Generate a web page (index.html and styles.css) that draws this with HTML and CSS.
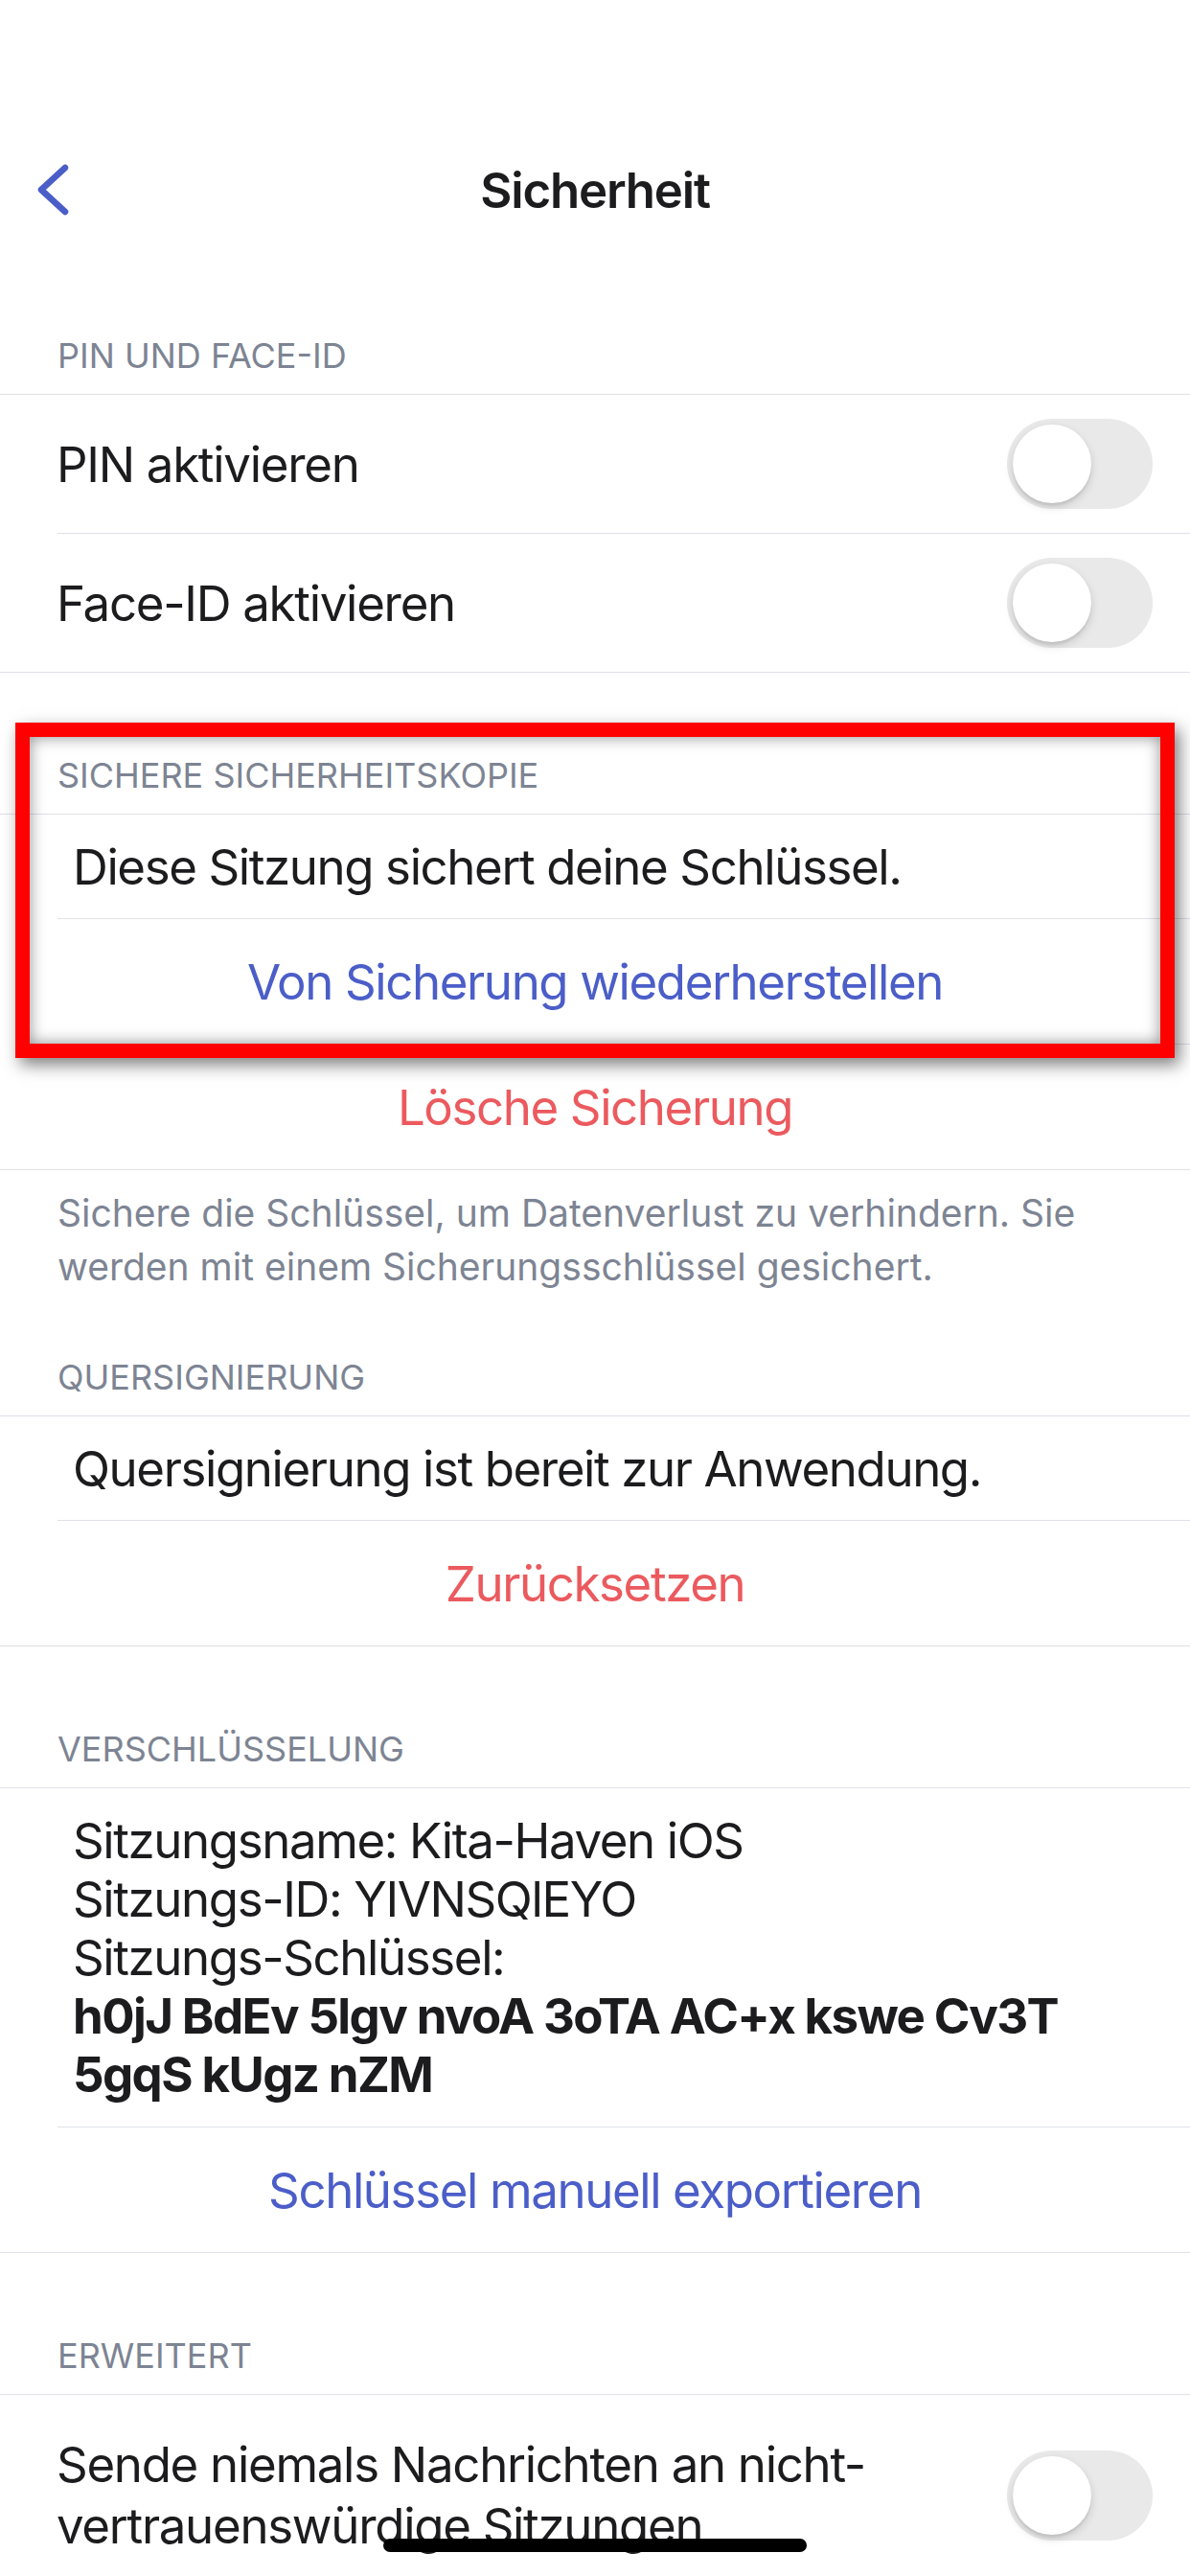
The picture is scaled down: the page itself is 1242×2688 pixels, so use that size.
FILE: index.html
```html
<!DOCTYPE html>
<html lang="de">
<head>
    <meta charset="UTF-8">
    <meta name="viewport" content="width=device-width, initial-scale=1.0">
    <title>Sicherheit</title>
    <link rel="stylesheet" href="styles.css">
</head>
<body>
    <div class="status-bar"></div>

    <div class="nav-bar">
        <div class="nav-back">
            <svg width="44" height="56" viewBox="0 0 44 56">
                <path d="M33 5 L8 28 L33 51" fill="none" stroke="#4b5ec8" stroke-width="6.5" stroke-linecap="round" stroke-linejoin="round"/>
            </svg>
        </div>
        <div class="nav-title">Sicherheit</div>
        <div></div>
    </div>

    <!-- PIN / Face-ID -->
    <div class="section-header">PIN und Face-ID</div>
    <div class="group">
        <div class="cell-toggle">
            <span>PIN aktivieren</span>
            <div class="toggle"><div class="knob"></div></div>
        </div>
        <div class="sep"></div>
        <div class="cell-toggle">
            <span>Face-ID aktivieren</span>
            <div class="toggle"><div class="knob"></div></div>
        </div>
    </div>

    <!-- Backup -->
    <div class="section-header">Sichere Sicherheitskopie</div>
    <div class="group">
        <div class="cell-info">Diese Sitzung sichert deine Schlüssel.</div>
        <div class="sep"></div>
        <div class="cell-button blue">Von Sicherung wiederherstellen</div>
        <div class="sep"></div>
        <div class="cell-button red">Lösche Sicherung</div>
    </div>
    <div class="footer">Sichere die Schlüssel, um Datenverlust zu verhindern. Sie<br>werden mit einem Sicherungsschlüssel gesichert.</div>

    <!-- Cross signing -->
    <div class="section-header after-footer">Quersignierung</div>
    <div class="group">
        <div class="cell-info">Quersignierung ist bereit zur Anwendung.</div>
        <div class="sep"></div>
        <div class="cell-button red">Zurücksetzen</div>
    </div>

    <!-- Encryption -->
    <div class="section-header">Verschlüsselung</div>
    <div class="group">
        <div class="cell-session">
            Sitzungsname: Kita-Haven iOS<br>
            Sitzungs-ID: YIVNSQlEYO<br>
            Sitzungs-Schlüssel:<br>
            <span class="key">h0jJ BdEv 5lgv nvoA 3oTA AC+x kswe Cv3T<br>5gqS kUgz nZM</span>
        </div>
        <div class="sep"></div>
        <div class="cell-button blue">Schlüssel manuell exportieren</div>
    </div>

    <!-- Advanced -->
    <div class="section-header">Erweitert</div>
    <div class="group">
        <div class="cell-toggle tall">
            <span class="two-line">Sende niemals Nachrichten an nicht-<br>vertrauenswürdige Sitzungen</span>
            <div class="toggle"><div class="knob"></div></div>
        </div>
    </div>

    <!-- screenshot annotation -->
    <div class="highlight-box"></div>
    <div class="home-indicator"></div>
</body>
</html>
```

FILE: styles.css
```css
* {
    box-sizing: border-box;
}

body {
    margin: 0;
    width: 1242px;
    height: 2688px;
    overflow: hidden;
    position: relative;
    background-color: #fff;
    font-family: "Inter", "Noto Sans", sans-serif;
    color: #1c1c1e;
}

.status-bar {
    height: 132px;
}

.nav-bar {
    height: 132px;
    display: grid;
    grid-template-columns: 1fr auto 1fr;
    align-items: center;
}

.nav-back {
    padding-left: 35px;
    display: flex;
    align-items: center;
}

.nav-back svg {
    display: block;
}

.nav-title {
    font-size: 51px;
    font-weight: 600;
    letter-spacing: -1.2px;
}

/* section headers */
.section-header {
    height: 147px;
    padding: 0 0 17px 60px;
    display: flex;
    align-items: flex-end;
    font-size: 36px;
    line-height: 46px;
    color: #7d8493;
    text-transform: uppercase;
}

.section-header.after-footer {
    height: 127px;
}

.group {
    border-top: 1px solid #dfe1e8;
    border-bottom: 1px solid #dfe1e8;
}

.sep {
    height: 1px;
    margin-left: 60px;
    background-color: #dfe1e8;
}

/* cells */
.cell-toggle {
    height: 144px;
    display: flex;
    align-items: center;
    justify-content: space-between;
    padding: 0 39px 0 59px;
    font-size: 51px;
    letter-spacing: -1.3px;
}

.cell-toggle.tall {
    height: 210px;
}

.two-line {
    line-height: 64px;
}

.cell-info {
    height: 108px;
    display: flex;
    align-items: center;
    padding-left: 76px;
    font-size: 51px;
    letter-spacing: -1.4px;
}

.cell-button {
    height: 130px;
    display: flex;
    align-items: center;
    justify-content: center;
    font-size: 51px;
    letter-spacing: -1.4px;
}

.blue {
    color: #4b5ec8;
}

.red {
    color: #eb5a5e;
}

.cell-session {
    padding: 24px 0 24px 76px;
    font-size: 51px;
    line-height: 61px;
    letter-spacing: -1.4px;
}

.key {
    font-weight: 700;
    letter-spacing: -1.6px;
}

.footer {
    padding: 17px 40px 0 60px;
    font-size: 39px;
    line-height: 56px;
    color: #7d8493;
}

/* switch */
.toggle {
    width: 152px;
    height: 94px;
    flex-shrink: 0;
    padding: 6px;
    border-radius: 47px;
    background-color: #e9e9ea;
    display: flex;
    align-items: center;
}

.knob {
    width: 82px;
    height: 82px;
    border-radius: 50%;
    background-color: #fff;
    box-shadow: 0 4px 10px rgba(0, 0, 0, 0.15), 0 3px 2px rgba(0, 0, 0, 0.06);
}

/* red annotation frame drawn over the screenshot */
.highlight-box {
    position: absolute;
    left: 16px;
    top: 754px;
    width: 1210px;
    height: 350px;
    border: 15px solid #ff0000;
    box-shadow: 5px 7px 16px rgba(0, 0, 0, 0.5), inset 0 0 16px rgba(0, 0, 0, 0.45);
}

.home-indicator {
    position: absolute;
    left: 400px;
    top: 2649px;
    width: 442px;
    height: 14px;
    border-radius: 7px;
    background-color: #000;
}
```
